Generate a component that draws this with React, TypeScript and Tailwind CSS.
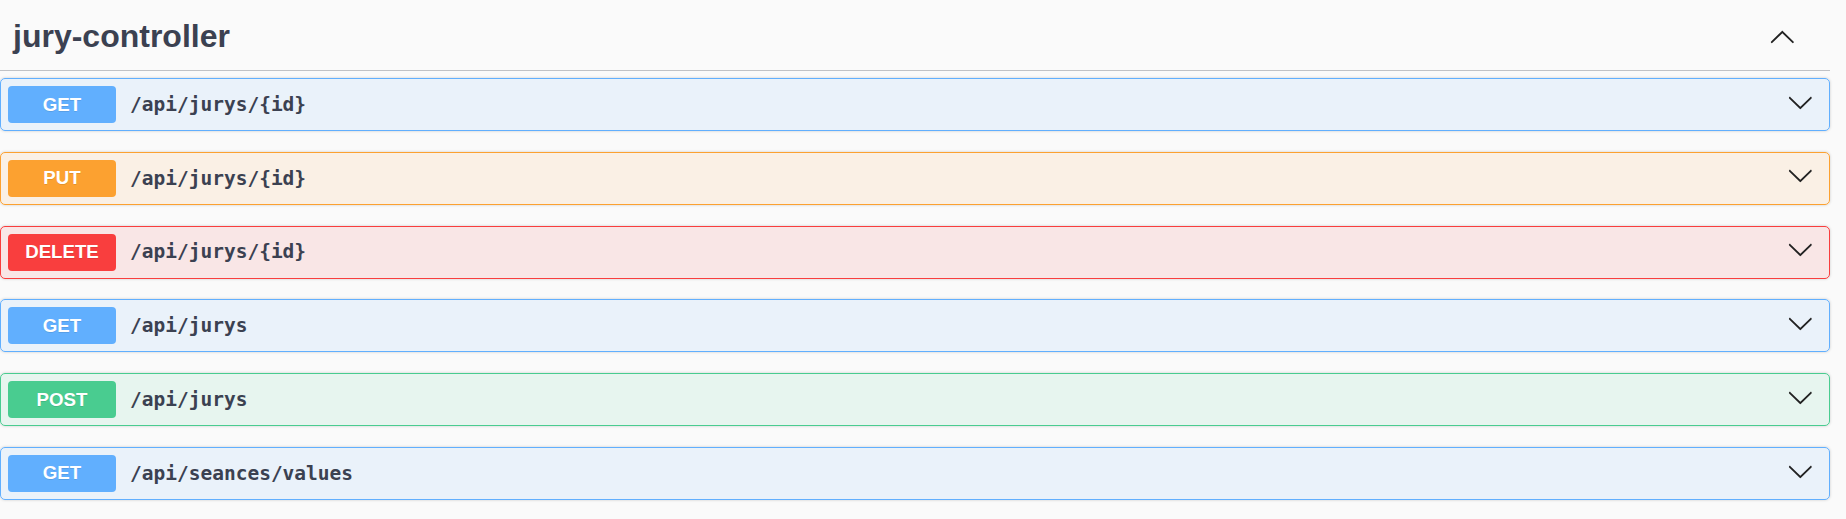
const endpoints = [
  { method: 'GET', path: '/api/jurys/{id}' },
  { method: 'PUT', path: '/api/jurys/{id}' },
  { method: 'DELETE', path: '/api/jurys/{id}' },
  { method: 'GET', path: '/api/jurys' },
  { method: 'POST', path: '/api/jurys' },
  { method: 'GET', path: '/api/seances/values' },
];

const styles: Record<string, { row: string; badge: string }> = {
  GET: { row: 'border-[#61affe] bg-[#61affe]/10', badge: 'bg-[#61affe]' },
  PUT: { row: 'border-[#fca130] bg-[#fca130]/10', badge: 'bg-[#fca130]' },
  DELETE: { row: 'border-[#f93e3e] bg-[#f93e3e]/10', badge: 'bg-[#f93e3e]' },
  POST: { row: 'border-[#49cc90] bg-[#49cc90]/10', badge: 'bg-[#49cc90]' },
};

const ArrowDown = () => (
  <svg width="26.67" height="26.67" viewBox="0 0 20 20" fill="#222">
    <path d="M17.418 6.109c.272-.268.709-.268.979 0s.271.701 0 .969l-7.908 7.83c-.27.268-.707.268-.979 0l-7.908-7.83c-.27-.268-.27-.701 0-.969.271-.268.709-.268.979 0L10 13.25l7.418-7.141z" />
  </svg>
);

const ArrowUp = () => (
  <svg width="26.67" height="26.67" viewBox="0 0 20 20" fill="#222">
    <path d="M17.418 14.908c.272.268.709.268.979 0s.271-.701 0-.969l-7.908-7.83c-.27-.268-.707-.268-.979 0l-7.908 7.83c-.27.268-.27.701 0 .969.271.268.709.268.979 0L10 7.767l7.418 7.141z" />
  </svg>
);

const Endpoint = ({ method, path }: { method: string; path: string }) => {
  const s = styles[method];
  return (
    <div
      className={`flex items-center rounded-[5px] border px-[7px] py-[7px] shadow-[0_0_3px_rgba(0,0,0,0.19)] ${s.row}`}
    >
      <span
        className={`flex h-[37px] w-[108px] items-center justify-center rounded-[4px] text-[18.67px] font-bold text-white [text-shadow:0_1px_0_rgba(0,0,0,0.1)] ${s.badge}`}
        style={{ fontFamily: '"Liberation Sans", Arial, sans-serif' }}
      >
        {method}
      </span>
      <span
        className="ml-[14px] flex-1 text-[19.5px] font-bold text-[#3b4151]"
        style={{ fontFamily: '"DejaVu Sans Mono", monospace' }}
      >
        {path}
      </span>
      <span className="mr-[8px] mb-[5px] flex">
        <ArrowDown />
      </span>
    </div>
  );
};

export default function App() {
  return (
    <div className="min-h-screen bg-[#fafafa] pr-[16px]">
      {/* Tag header */}
      <div className="flex h-[71px] items-center border-b border-[#3b4151]/30 pl-[13px] pt-[2px]">
        <h3
          className="flex-1 text-[32px] font-bold leading-[36px] text-[#3b4151]"
          style={{ fontFamily: '"Liberation Sans", Arial, sans-serif' }}
        >
          jury-controller
        </h3>
        <span className="mr-[34px] flex">
          <ArrowUp />
        </span>
      </div>

      {/* Operations */}
      <div className="mt-[7px] flex flex-col gap-[20.8px]">
        {endpoints.map((e, i) => (
          <Endpoint key={i} method={e.method} path={e.path} />
        ))}
      </div>
    </div>
  );
}
